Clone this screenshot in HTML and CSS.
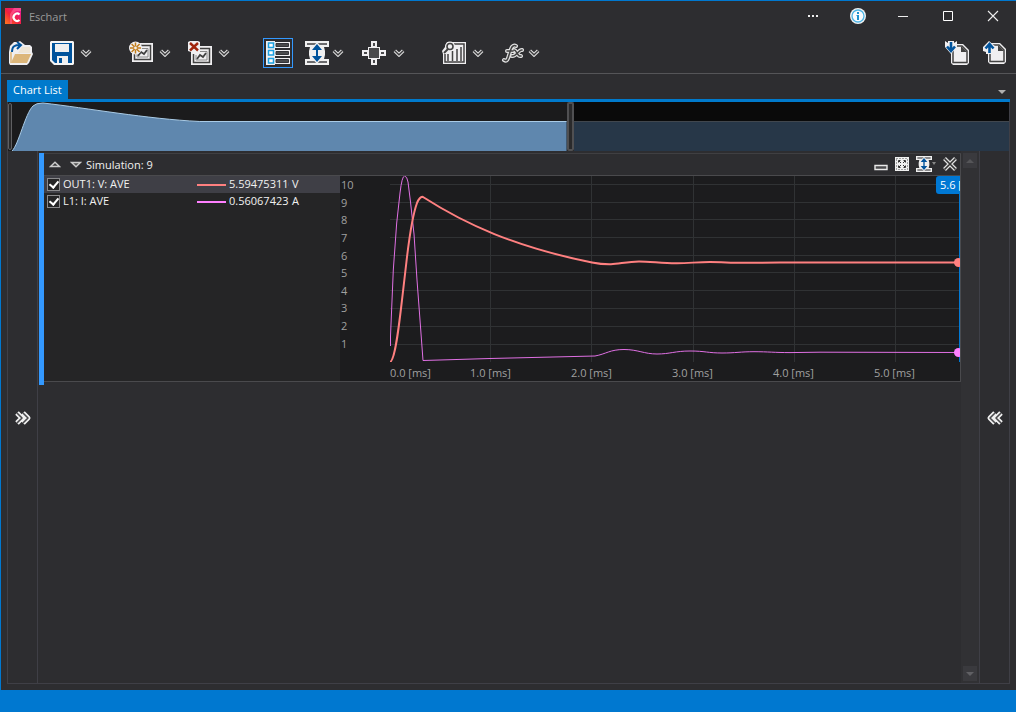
FILE: index.html
```html
<!DOCTYPE html>
<html lang="en">
<head>
<meta charset="utf-8">
<meta name="viewport" content="width=device-width, initial-scale=1">
<title>Eschart</title>
<link rel="stylesheet" href="styles.css">
</head>
<body>
<svg class="defs" aria-hidden="true">
  <symbol id="chevron" viewBox="0 0 12 8">
    <path d="M1.8 1.8 6 5.8 10.2 1.8" fill="none" stroke="#dcdcdc" stroke-width="3.6"/>
    <path d="M1.8 1.8 6 5.8 10.2 1.8" fill="none" stroke="#3c3c3e" stroke-width="1.3"/>
  </symbol>
  <symbol id="fit-height" viewBox="0 0 24 24">
    <path d="M0 0h24v6h-5l1 4v4l-1 4h5v6H0v-6h5l-1-4v-4l1-4H0z" fill="#f0f0f0"/>
    <path d="M2 2h20v2H2zM2 20h20v2H2z" fill="#6a6a6c"/>
    <path d="M12 1l6 7v2h-4v4h4v2l-6 7-6-7v-2h4v-4H6V8z" fill="#f0f0f0"/>
    <path d="M12 3l5 6H7zM12 21l-5-6h10zM11 8h2v8h-2z" fill="#00539c"/>
  </symbol>
  <symbol id="page" viewBox="0 0 24 24">
    <path d="M7 3h11l6 6v13l-2 2H8l-2-2V5z" fill="#f0eff1"/>
    <path d="M8 5h9l5 5v11.500H8z" fill="#f0eff1" stroke="#424242" stroke-width="1.500"/>
    <path d="M16 5v6h6z" fill="#424242"/>
  </symbol>
</svg>
<div class="window">
  <header class="titlebar">
    <svg class="logo" viewBox="0 0 16 16" aria-hidden="true">
      <defs><linearGradient id="lg" x1="0" y1="1" x2="1" y2="0"><stop offset="0" stop-color="#ff7a1c"/><stop offset=".45" stop-color="#f0203c"/><stop offset="1" stop-color="#e81aa8"/></linearGradient></defs>
      <rect width="16" height="16" fill="url(#lg)"/>
      <path d="M9 0h7v3h-5L7 7v9H5V6z" fill="#ff5a8c" opacity=".7"/>
      <path d="M14.500 6.500a3.600 3.600 0 1 0 0 5.500" fill="none" stroke="#fff" stroke-width="2.200"/>
    </svg>
    <h1 class="title">Eschart</h1>
    <div class="caption-buttons">
      <button class="caption" aria-label="More"><svg width="12" height="12" viewBox="0 0 12 12"><path d="M1 5h2v2H1zM5 5h2v2H5zM9 5h2v2H9z" fill="#eee"/></svg></button>
      <button class="caption" aria-label="Information"><svg width="16" height="16" viewBox="0 0 16 16"><circle cx="8" cy="8" r="8" fill="#f2f2f2"/><circle cx="8" cy="8" r="6" fill="#f8fcff" stroke="#4db5e6" stroke-width="1.300"/><path d="M7 4h2v2H7zM6.500 7H9v5H7V8h-.5z" fill="#1b90cf"/></svg></button>
      <button class="caption" aria-label="Minimize"><svg width="12" height="12" viewBox="0 0 12 12"><path d="M1 6.500h10" stroke="#eee"/></svg></button>
      <button class="caption" aria-label="Maximize"><svg width="12" height="12" viewBox="0 0 12 12"><path d="M1.500 1.500h9v9h-9z" fill="none" stroke="#fff"/></svg></button>
      <button class="caption" aria-label="Close"><svg width="12" height="12" viewBox="0 0 12 12"><path d="M1 1l10 10M11 1L1 11" stroke="#eee" stroke-width="1.100"/></svg></button>
    </div>
  </header>

  <div class="toolbar" role="toolbar" aria-label="Chart tools">
    <button class="tool" aria-label="Open"><svg width="24" height="24" viewBox="0 0 24 24">
      <path d="M1 5l4-4h4l2-1 5 4h5l2 2v5l1 2-4 9-2 2H1l-1-2V11z" fill="#f0eff1"/>
      <path d="M2 11v11M13 7h7v5" fill="none" stroke="#dcb67a" stroke-width="1.500"/>
      <path d="M6 13h16l-4 9H2z" fill="#dcb67a"/><path d="M13 6h8v6H9z" fill="#efe6d6"/>
      <path d="M3 11c0-6 3-7 8-7M8 1l4 3-4 4" fill="none" stroke="#00539c" stroke-width="2"/></svg></button>
    <div class="split gap-tool">
      <button class="tool" aria-label="Save"><svg width="24" height="24" viewBox="0 0 24 24">
        <path d="M1 0h22l1 1v22l-1 1H4l-4-4V1z" fill="#f5f5f5"/><path d="M2 2h20v20H5l-3-3z" fill="#00539c"/>
        <path d="M5 3h14v8H5z" fill="#f0f0f0"/><path d="M7 15h11v7H7z" fill="#f0f0f0"/><path d="M9 17h3v5H9z" fill="#00539c"/></svg></button>
      <button class="drop" aria-label="Save options"><svg width="12" height="8"><use href="#chevron"/></svg></button>
    </div>
    <div class="split gap-group">
      <button class="tool" aria-label="New chart"><svg width="24" height="24" viewBox="0 0 24 24">
        <path d="M8 2h16v19H3V10h5z" fill="#f0eff1"/><path d="M5.500 12v6.500h16v-14H12" fill="none" stroke="#424242" stroke-width="1.500"/>
        <path d="M12 7.500h7V16H8v-3" fill="none" stroke="#8a8a8a"/><path d="M9 15l3-4 3 2 3-4" fill="none" stroke="#424242" stroke-width="1.800"/>
        <circle cx="6.500" cy="7" r="6.500" fill="#f0eff1"/>
        <path d="M6.500 1.500v11M1 7h11M2.600 3l8 8M10.600 3l-8 8" stroke="#c27d1a" stroke-width="1.500"/><circle cx="6.500" cy="7" r="1.400" fill="#f0eff1"/></svg></button>
      <button class="drop" aria-label="New chart options"><svg width="12" height="8"><use href="#chevron"/></svg></button>
    </div>
    <div class="split gap-tool">
      <button class="tool" aria-label="Delete chart"><svg width="24" height="24" viewBox="0 0 24 24">
        <path d="M0 1l2-1h8l2 1v4h12v19H3V11L0 10z" fill="#f0eff1"/><path d="M5.500 13v8.500h16v-14H12" fill="none" stroke="#424242" stroke-width="1.500"/>
        <path d="M12 10.500h7V19H8v-5" fill="none" stroke="#8a8a8a"/><path d="M9 18l3-4 3 2 3-4" fill="none" stroke="#424242" stroke-width="1.800"/>
        <path d="M2 2l8 7.500M10 2L2 9.500" stroke="#a1260d" stroke-width="2.400"/></svg></button>
      <button class="drop" aria-label="Delete options"><svg width="12" height="8"><use href="#chevron"/></svg></button>
    </div>
    <button class="tool tool-active gap-wide" aria-label="Chart list" aria-pressed="true"><svg width="24" height="24" viewBox="0 0 24 24">
      <path d="M0 0h24v24H0z" fill="#f0eff1"/><path d="M9 0h15v1H9zM9 7h15v2H9zM9 15h15v2H9zM9 23h15v1H9z" fill="#2d2d30"/>
      <path d="M10 2.500h12.500v3H10zM10 10.500h12.500v3H10zM10 18.500h12.500v3H10z" fill="#4a4a4c" stroke="#333337"/>
      <path d="M2.500 2h5v4.500h-5zM2.500 9.500h5v4.500h-5zM2.500 17.500h5V22h-5z" fill="#fff" stroke="#1ba1e2" stroke-width="1.500"/></svg></button>
    <div class="split split-tight gap-near">
      <button class="tool" aria-label="Fit height"><svg width="24" height="24"><use href="#fit-height"/></svg></button>
      <button class="drop" aria-label="Fit height options"><svg width="12" height="8"><use href="#chevron"/></svg></button>
    </div>
    <div class="split gap-tool">
      <button class="tool tool-wide" aria-label="Center"><svg width="24" height="24" viewBox="0 0 24 24">
        <path d="M9 0h6v6h3v3h6v6h-6v3h-3v6H9v-6H6v-3H0V9h6V6h3z" fill="#f0eff1"/>
        <path d="M7 7h10v10H7z" fill="#4a4a4c"/><path d="M11 2h2v3h-2zM11 19h2v3h-2zM2 11h3v2H2zM19 11h3v2h-3z" fill="#4a4a4c"/></svg></button>
      <button class="drop" aria-label="Center options"><svg width="12" height="8"><use href="#chevron"/></svg></button>
    </div>
    <div class="split gap-group">
      <button class="tool" aria-label="Analysis"><svg width="24" height="24" viewBox="0 0 24 24">
        <path d="M5 1h19v22H1V13L0 10l3-4z" fill="#f0eff1"/><path d="M12 3h10v18H3v-8" fill="none" stroke="#424242" stroke-width="1.500"/>
        <path d="M6 13v7M10.500 10v10M15 8v12M19 6v14" stroke="#424242" stroke-width="1.500"/>
        <circle cx="8" cy="5.500" r="5" fill="#f0eff1"/><circle cx="8" cy="5.500" r="3" fill="#f0eff1" stroke="#424242" stroke-width="1.600"/><path d="M6 8l-4 4" stroke="#424242" stroke-width="2"/></svg></button>
      <button class="drop" aria-label="Analysis options"><svg width="12" height="8"><use href="#chevron"/></svg></button>
    </div>
    <div class="split split-tight gap-tool">
      <button class="tool" aria-label="Function"><svg width="24" height="24" viewBox="0 0 24 24">
        <g fill="none" stroke-linecap="round"><g stroke="#e0e0e0" stroke-width="4"><path d="M3 19c3 2 4-1 5-5l2-6c1-3 3-4 5-3M6 10h6M13 9c3 0 3 7 7 6M21 9c-3-1-6 7-10 6"/></g>
        <g stroke="#424242" stroke-width="1.500"><path d="M3 19c3 2 4-1 5-5l2-6c1-3 3-4 5-3M6 10h6M13 9c3 0 3 7 7 6M21 9c-3-1-6 7-10 6"/></g></g></svg></button>
      <button class="drop" aria-label="Function options"><svg width="12" height="8"><use href="#chevron"/></svg></button>
    </div>
    <div class="toolbar-end">
      <button class="tool" aria-label="Import"><svg width="24" height="24"><use href="#page" width="24" height="24"/><path d="M0 0l3 2V0h6v2l3-2v6l-6 7-6-7z" fill="#f0eff1"/><path d="M6 1v9M2 5.500l4 4.500 4-4.500" fill="none" stroke="#00539c" stroke-width="2.600"/></svg></button>
      <button class="tool" aria-label="Export"><svg width="24" height="24"><use href="#page" x="-1" y="-1" width="24" height="24"/><path d="M6 0l7 6v4l-3 1v2H3v-2l-3-1V6z" fill="#f0eff1"/><path d="M6.500 12V3M2.500 7.500l4-4.500 4 4.500" fill="none" stroke="#00539c" stroke-width="2.600"/></svg></button>
    </div>
  </div>

  <nav class="tabs">
    <button class="tab">Chart List</button>
    <button class="tabs-menu" aria-label="Tab list"><svg width="8" height="4" viewBox="0 0 8 4"><path d="M0 0h8L4 4z" fill="#b0b0b0"/></svg></button>
  </nav>

  <main class="document">
    <div class="overview">
      <div class="handle handle-start"></div>
      <svg class="range range-selected" viewBox="0 0 555 49" preserveAspectRatio="none" aria-hidden="true">
        <path d="M0 49C7 42 13 12 21 4Q24 1 31 1C75 6 135 17 188 19.500H555V49z" fill="#5f87ae"/>
        <path d="M0 49C7 42 13 12 21 4Q24 1 31 1C75 6 135 17 188 19.500H555" fill="none" stroke="#a9cbe6" vector-effect="non-scaling-stroke"/>
      </svg>
      <div class="handle handle-end"></div>
      <svg class="range range-rest" viewBox="0 0 434 49" preserveAspectRatio="none" aria-hidden="true">
        <path d="M0 20H434V49H0z" fill="#273748"/><path d="M0 19.500H434" stroke="#41474e"/>
      </svg>
    </div>

    <div class="workspace">
      <aside class="rail rail-left"><button class="expander" aria-label="Expand left panel"><svg width="18" height="16" viewBox="0 0 18 16">
        <g fill="none" stroke-linejoin="round"><path d="M3 3l5 5-5 5M9 3l5 5-5 5" stroke="#f0f0f0" stroke-width="5"/><path d="M3 3l5 5-5 5M9 3l5 5-5 5" stroke="#4a4a4c" stroke-width="1.600"/></g></svg></button></aside>

      <div class="chart-list">
        <section class="card">
          <header class="card-head">
            <button class="mini" aria-label="Move up"><svg width="12" height="7" viewBox="0 0 12 7"><path d="M1.500 5.500L6 1.200l4.500 4.300z" fill="#3c3c3e" stroke="#ccc" stroke-width="1.400"/></svg></button>
            <button class="mini" aria-label="Move down"><svg width="12" height="7" viewBox="0 0 12 7"><path d="M1.500 1.500L6 5.800l4.500-4.300z" fill="#555" stroke="#ccc" stroke-width="1.400"/></svg></button>
            <h2 class="card-title">Simulation: 9</h2>
            <div class="card-actions">
              <button class="mini" aria-label="Collapse"><svg width="14" height="14" viewBox="0 0 14 14"><path d="M1 8.500h12v4H1z" fill="#4a4a4c" stroke="#e8e8e8" stroke-width="1.400"/></svg></button>
              <button class="mini" aria-label="Fit all"><svg width="14" height="14" viewBox="0 0 14 14"><path d="M0 0h14v14H0z" fill="#f0f0f0"/><path d="M3.500 5.500v-2h2M8.500 3.500h2v2M10.500 8.500v2h-2M5.500 10.500h-2v-2M4 4l2 2M10 4L8 6M10 10L8 8M4 10l2-2" fill="none" stroke="#333"/><path d="M1.500 1.500h11v11h-11z" fill="none" stroke="#555" stroke-dasharray="1 2"/></svg></button>
              <button class="mini" aria-label="Fit height"><svg width="20" height="16" viewBox="0 0 20 16"><use href="#fit-height" width="16" height="16"/><path d="M16 6h4l-2 3z" fill="#888"/></svg></button>
              <button class="mini" aria-label="Remove"><svg width="14" height="14" viewBox="0 0 14 14"><path d="M1.500 1.500l11 11M12.500 1.500l-11 11" stroke="#e0e0e0" stroke-width="4"/><path d="M1.500 1.500l11 11M12.500 1.500l-11 11" stroke="#333" stroke-width="1.600"/></svg></button>
            </div>
          </header>
          <div class="card-body">
            <ul class="legend">
              <li class="series series-selected"><input class="check" type="checkbox" id="s1" checked><label for="s1">OUT1: V: AVE</label><span class="swatch swatch-voltage"></span><span class="value">5.594753116</span><span>V</span></li>
              <li class="series"><input class="check" type="checkbox" id="s2" checked><label for="s2">L1: I: AVE</label><span class="swatch swatch-current"></span><span class="value">0.560674235</span><span>A</span></li>
            </ul>
            <div class="chart">
              <div class="y-axis"><span>10</span><span>9</span><span>8</span><span>7</span><span>6</span><span>5</span><span>4</span><span>3</span><span>2</span><span>1</span></div>
              <div class="plot">
                <svg class="curves" viewBox="0 0 570 186" preserveAspectRatio="none" role="img" aria-label="Voltage and current over time">
                  <path class="grid" d="M0 8.500H570M0 26.500H570M0 43.500H570M0 61.500H570M0 79.500H570M0 96.500H570M0 114.500H570M0 132.500H570M0 150.500H570M0 168.500H570M100.500 0V186M201.500 0V186M303.500 0V186M404.500 0V186M505.500 0V186"/>
                  <path class="current" d="M0.500 170V160L3.300 94 6.700 47 10 17Q12 0 14.500 0Q17 0 18 6L20.500 26 24 58 27 104 30 144 33 184.500 100 182.500 205 180C216 178 220 173.500 234 173.500S254 178 267 178S285 175 300 175S318 177 332 177S350 175.700 364 175.700S385 176.600 400 176.600L430 176.200 570 176.500"/>
                  <path class="voltage" d="M0 186C5 185 9 150 12 124L17 81C20 56 23 38 27 27Q30 20 33 21C75 48 125 71 202 86.500Q212 88.500 221 88.300C229 88 238 85.500 249 85.500S274 87.500 287 87.300 308 86 320 86 340 86.800 352 86.800L390 86.500H570"/>
                </svg>
                <span class="cursor"></span>
                <span class="dot dot-voltage"></span>
                <span class="dot dot-current"></span>
                <span class="cursor-label">5.6 [ms]</span>
              </div>
              <div class="x-axis"><span class="origin">0.0 [ms]</span><span>1.0 [ms]</span><span>2.0 [ms]</span><span>3.0 [ms]</span><span>4.0 [ms]</span><span>5.0 [ms]</span></div>
            </div>
          </div>
        </section>
      </div>

      <div class="scrollbar">
        <button class="scroll-button" aria-label="Scroll up"><svg width="8" height="4" viewBox="0 0 8 4"><path d="M0 4h8L4 0z" fill="#555558"/></svg></button>
        <button class="scroll-button" aria-label="Scroll down"><svg width="8" height="4" viewBox="0 0 8 4"><path d="M0 0h8L4 4z" fill="#606064"/></svg></button>
      </div>

      <aside class="rail rail-right"><button class="expander" aria-label="Expand right panel"><svg width="18" height="16" viewBox="0 0 18 16">
        <g fill="none" stroke-linejoin="round"><path d="M15 3l-5 5 5 5M9 3L4 8l5 5" stroke="#f0f0f0" stroke-width="5"/><path d="M15 3l-5 5 5 5M9 3L4 8l5 5" stroke="#4a4a4c" stroke-width="1.600"/></g></svg></button></aside>
    </div>
  </main>
  <footer class="statusbar"></footer>
</div>
</body>
</html>
```

FILE: styles.css
```css
* { box-sizing: border-box; }

body {
  margin: 0;
  background: #2d2d30;
  color: #f1f1f1;
  font: 11px/17px "Open Sans", "Noto Sans", sans-serif;
}

button {
  display: flex;
  align-items: center;
  justify-content: center;
  padding: 0;
  border: 0;
  background: none;
  color: inherit;
  font: inherit;
}

svg { display: block; flex: none; }
.defs { position: absolute; width: 0; height: 0; }
h1, h2, ul { margin: 0; padding: 0; font: inherit; list-style: none; }

.window {
  display: flex;
  flex-direction: column;
  min-height: 100vh;
  border: 1px solid #0078d0;
  border-width: 1px 0 0 1px;
}

/* Title bar */
.titlebar {
  display: flex;
  align-items: center;
  height: 30px;
  padding: 0 1px 0 4px;
}
.logo { width: 16px; height: 16px; }
.title { margin-left: 8px; color: #999; }
.caption-buttons { display: flex; margin-left: auto; }
.caption { width: 45px; height: 30px; }

/* Toolbar */
.toolbar {
  display: flex;
  align-items: center;
  height: 43px;
  padding: 2px 9px 0 8px;
  border-bottom: 1px solid #555558;
}
.tool { width: 24px; height: 24px; }
.tool-wide { width: 26px; }
.tool-active { width: 30px; height: 30px; border: 1px solid #3399ff; }
.drop { width: 12px; height: 24px; }
.split { display: flex; gap: 6px; }
.split-tight { gap: 3px; }
.gap-near { margin-left: 12px; }
.gap-tool { margin-left: 17px; }
.gap-wide { margin-left: 33px; }
.gap-group { margin-left: 37px; }
.toolbar-end { display: flex; gap: 14px; margin-left: auto; }

/* Tabs */
.tabs {
  display: flex;
  justify-content: space-between;
  margin: 6px 6px 0;
  border-bottom: 3px solid #007acc;
}
.tab { height: 19px; padding: 0 6px; background: #007acc; color: #fff; }
.tabs-menu { width: 16px; height: 23px; margin-bottom: -4px; }

/* Document */
.document {
  display: flex;
  flex: 1;
  flex-direction: column;
  margin: 0 6px 6px;
  border: 1px solid #3f3f46;
  border-top: 0;
}
.overview { display: flex; height: 49px; background: #1b1b1c; }
.range { min-width: 0; height: 49px; }
.range-selected { flex: 554 1 0; }
.range-rest { flex: 435 1 0; background: #0a0a0a; }
.handle { flex: none; border: 1px solid #606062; border-radius: 2px; background: #2a2a2b; }
.handle-start { width: 4px; margin: 1px 0; }
.handle-end { width: 7px; border-width: 2px; border-color: #505052; }

.workspace { display: flex; flex: 1; }
.rail { display: flex; align-items: center; justify-content: center; flex: none; width: 30px; padding-top: 2px; }
.rail-left { border-right: 1px solid #3f3f46; }
.rail-right { border-left: 1px solid #3f3f46; }
.expander { width: 24px; height: 24px; }
.chart-list { flex: 1; min-width: 0; padding: 2px 0 0 1px; }

.scrollbar {
  display: flex;
  flex-direction: column;
  justify-content: space-between;
  flex: none;
  width: 18px;
  padding: 2px;
  background: #313134;
}
.scroll-button { width: 14px; height: 15px; background: #3a3a3e; }

/* Chart card */
.card { border-left: 5px solid #3399ff; padding-bottom: 3px; }
.card-head {
  display: flex;
  align-items: center;
  height: 22px;
  padding: 0 3px 1px 5px;
  border-top: 1px solid #3f3f42;
  border-right: 1px solid #4a4a4d;
}
.card-head > .mini + .mini { margin-left: 9px; }
.card-title { margin-left: 4px; }
.card-actions { display: flex; align-items: center; gap: 7px; margin-left: auto; }
.card-body { display: flex; border: 1px solid #4a4a4d; border-left: 0; background: #252526; }

.legend { flex: none; width: 296px; }
.series {
  display: grid;
  grid-template-columns: 13px 131px 29px 60px 1fr;
  column-gap: 3px;
  align-items: center;
  height: 17px;
  padding-left: 3px;
  line-height: 15px;
  white-space: nowrap;
}
.series > label, .value, .value + span { padding-bottom: 2px; }
.series-selected { background: #3f3f46; }
.check {
  display: grid;
  place-items: center;
  width: 13px;
  height: 13px;
  margin: 0;
  appearance: none;
  border: 1px solid #8a8a8c;
  background: #252526;
}
.check:checked::after {
  content: "";
  width: 4px;
  height: 7px;
  margin-bottom: 2px;
  border: solid #fff;
  border-width: 0 2px 2px 0;
  transform: rotate(40deg);
}
.swatch { height: 2px; }
.swatch-voltage { background: #ff8080; }
.swatch-current { background: #ff80ff; }
.value { overflow: hidden; }

/* Plot */
.chart {
  display: grid;
  flex: 1;
  min-width: 0;
  grid-template-columns: 50px minmax(0, 1fr);
  grid-template-rows: 186px 19px;
  background: #1c1c1e;
  color: #a0a0a0;
}
.y-axis {
  display: grid;
  grid-template-rows: repeat(10, 1fr);
  align-items: center;
  height: 176px;
  padding-left: 1px;
}
.plot { position: relative; overflow: hidden; }
.curves { width: 100%; height: 186px; }
.curves path { fill: none; vector-effect: non-scaling-stroke; }
.curves .grid { stroke: #303234; }
.curves .current { stroke: #e070e4; }
.curves .voltage { stroke: #ff8080; stroke-width: 2; }
.cursor { position: absolute; top: 0; right: 0; width: 1px; height: 100%; background: #0078d4; }
.dot { position: absolute; right: -3px; width: 9px; height: 9px; border-radius: 50%; }
.dot-voltage { top: 82px; background: #ff8080; }
.dot-current { top: 172px; background: #ff80ff; }
.cursor-label {
  position: absolute;
  top: 0;
  left: calc(100% - 24px);
  padding: 0 4px 1px;
  border-radius: 3px;
  background: #0078d4;
  color: #fff;
  white-space: nowrap;
}
.x-axis {
  display: grid;
  grid-column: 2;
  grid-template-columns: 50fr repeat(5, 101fr) 15fr;
  align-items: center;
  padding-top: 1px;
  text-align: center;
  white-space: nowrap;
}
.origin { text-align: left; }

.statusbar { height: 22px; background: #0078d0; }
```
